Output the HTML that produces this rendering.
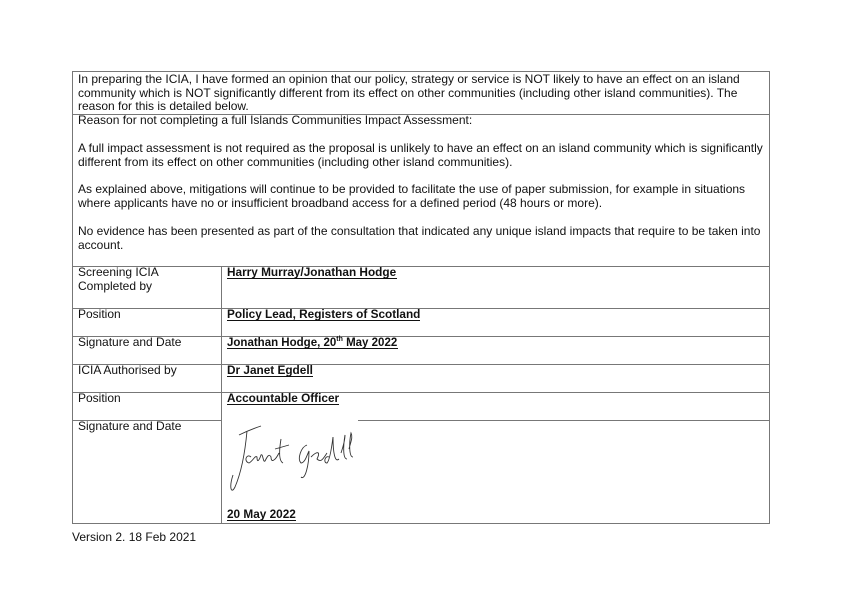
<!DOCTYPE html>
<html><head><style>
body{margin:0;width:842px;height:596px;background:#fff;position:relative;overflow:hidden}
svg{position:absolute;left:0;top:0}
text{font-family:"Liberation Sans",sans-serif;font-size:12px;fill:#111}
.b{font-weight:bold;font-size:11.8px}
</style></head><body>
<svg width="842" height="596">
<g fill="#777">
<rect x="72" y="71" width="698" height="1"/>
<rect x="72" y="114" width="698" height="1"/>
<rect x="72" y="266" width="698" height="1"/>
<rect x="72" y="308" width="698" height="1"/>
<rect x="72" y="336" width="698" height="1"/>
<rect x="72" y="364" width="698" height="1"/>
<rect x="72" y="392" width="698" height="1"/>
<rect x="72" y="420" width="150" height="1"/>
<rect x="358" y="420" width="412" height="1"/>
<rect x="72" y="523" width="698" height="1"/>
<rect x="72" y="71" width="1" height="453"/>
<rect x="769" y="71" width="1" height="453"/>
<rect x="221" y="266" width="1" height="258"/>
</g>
<g>
<text x="78" y="83">In preparing the ICIA, I have formed an opinion that our policy, strategy or service is NOT likely to have an effect on an island</text>
<text x="78" y="97">community which is NOT significantly different from its effect on other communities (including other island communities). The</text>
<text x="78" y="110">reason for this is detailed below.</text>
<text x="78" y="124">Reason for not completing a full Islands Communities Impact Assessment:</text>
<text x="78" y="152">A full impact assessment is not required as the proposal is unlikely to have an effect on an island community which is significantly</text>
<text x="78" y="166">different from its effect on other communities (including other island communities).</text>
<text x="78" y="193">As explained above, mitigations will continue to be provided to facilitate the use of paper submission, for example in situations</text>
<text x="78" y="207">where applicants have no or insufficient broadband access for a defined period (48 hours or more).</text>
<text x="78" y="235">No evidence has been presented as part of the consultation that indicated any unique island impacts that require to be taken into</text>
<text x="78" y="249">account.</text>

<text x="78" y="276">Screening ICIA</text>
<text x="78" y="290">Completed by</text>
<text x="78" y="318">Position</text>
<text x="78" y="346">Signature and Date</text>
<text x="78" y="374">ICIA Authorised by</text>
<text x="78" y="402">Position</text>
<text x="78" y="430">Signature and Date</text>

<text class="b" x="227" y="276">Harry Murray/Jonathan Hodge</text>
<text class="b" x="227" y="318">Policy Lead, Registers of Scotland</text>
<text class="b" x="227" y="346" style="font-size:11.5px">Jonathan Hodge, 20<tspan font-size="7" dy="-5">th</tspan><tspan dy="5"> May 2022</tspan></text>
<text class="b" x="227" y="374">Dr Janet Egdell</text>
<text class="b" x="227" y="402">Accountable Officer</text>
<text class="b" x="227" y="518">20 May 2022</text>
<text x="72" y="541">Version 2. 18 Feb 2021</text>
</g>
<g fill="#111">
<rect x="227" y="278" width="170" height="1"/>
<rect x="227" y="320" width="193" height="1"/>
<rect x="227" y="348" width="171" height="1"/>
<rect x="227" y="376" width="86" height="1"/>
<rect x="227" y="404" width="112" height="1"/>
<rect x="227" y="520" width="69" height="1"/>
</g>
<g transform="translate(225,425)" fill="none" stroke="#333" stroke-width="0.9">
<path d="M14 10 C22 6 30 3 36 1 M22 6 C20 28 16 48 10 62 C6 70 4 62 8 50"/>
<path d="M26 32 C22 28 18 36 24 38 C28 36 30 30 32 32 C32 38 34 36 36 30 C38 28 38 38 40 36 C42 32 44 28 46 32 C46 38 50 36 54 28 M56 14 C54 26 54 36 58 38 M50 24 L64 20"/>
<path d="M82 20 C76 22 72 34 76 38 C80 38 82 30 84 26 C84 40 80 56 76 52 M86 32 C92 26 96 26 92 34 C96 38 98 34 102 28 M104 32 C100 30 98 38 102 38 C104 36 106 28 108 12 C108 28 110 38 114 34 M116 28 C118 22 120 14 120 10 C118 22 118 34 122 34 M124 24 C126 16 128 12 126 8 C124 18 124 32 128 32"/>
</g>
</svg>
</body></html>
